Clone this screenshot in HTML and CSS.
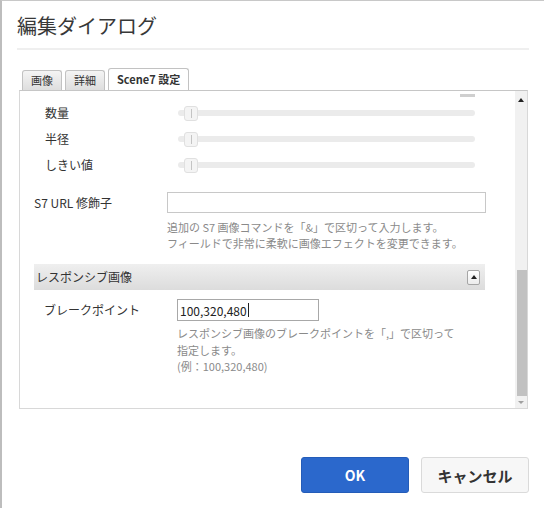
FILE: index.html
```html
<!DOCTYPE html>
<html lang="ja">
<head>
<meta charset="utf-8">
<title>編集ダイアログ</title>
<link rel="stylesheet" href="styles.css">
</head>
<body>
<div class="dialog">
  <h1 class="title">編集ダイアログ</h1>
  <div class="tabs">
    <div class="tab">画像</div>
    <div class="tab">詳細</div>
    <div class="tab active">Scene7 設定</div>
  </div>
  <div class="panel">
    <div class="content">
      <div class="cut"></div>
      <div class="slider-row">
        <span class="slabel">数量</span>
        <div class="track"><span class="handle"></span></div>
      </div>
      <div class="slider-row">
        <span class="slabel">半径</span>
        <div class="track"><span class="handle"></span></div>
      </div>
      <div class="slider-row">
        <span class="slabel">しきい値</span>
        <div class="track"><span class="handle"></span></div>
      </div>
      <div class="field-row s7">
        <span class="flabel">S7 URL 修飾子</span>
        <div class="input wide"></div>
      </div>
      <div class="help s7help">追加の S7 画像コマンドを「&amp;」で区切って入力します。<br>フィールドで非常に柔軟に画像エフェクトを変更できます。</div>
      <div class="section">
        <span class="section-title">レスポンシブ画像</span>
        <span class="collapse"><span class="tri-up"></span></span>
      </div>
      <div class="field-row bp">
        <span class="flabel bplabel">ブレークポイント</span>
        <div class="input narrow">100,320,480<span class="caret"></span></div>
      </div>
      <div class="help bphelp">レスポンシブ画像のブレークポイントを「,」で区切って<br>指定します。<br>(例：100,320,480)</div>
    </div>
    <div class="scrollbar">
      <div class="arrow up"><span class="tri-up"></span></div>
      <div class="strack"><div class="thumb"></div></div>
      <div class="arrow down"><span class="tri-down"></span></div>
    </div>
  </div>
  <div class="footer">
    <button class="btn ok">OK</button>
    <button class="btn cancel">キャンセル</button>
  </div>
</div>
</body>
</html>
```
FILE: styles.css
```css
* { box-sizing: border-box; }
html, body { margin: 0; padding: 0; background: #fff; }
body {
  font-family: "Noto Sans CJK JP", "Noto Sans", sans-serif;
  color: #333;
}
.dialog {
  width: 544px;
  height: 508px;
  border-top: 1px solid #c8c8c8;
  border-left: 2px solid #bdbdbd;
  padding: 0 15px 0 15px;
  display: flex;
  flex-direction: column;
  overflow: hidden;
}
.title {
  margin: 0;
  padding: 11px 0 8px 0;
  font-size: 20px;
  line-height: 28px;
  font-weight: normal;
  color: #383838;
  border-bottom: 2px solid #efefef;
}
.tabs {
  display: flex;
  align-items: flex-end;
  gap: 3px;
  margin: 18px 0 0 5px;
  height: 22px;
}
.tab {
  height: 20px;
  padding: 0 8px;
  font-size: 11px;
  line-height: 19px;
  color: #333;
  background: linear-gradient(#f4f4f4, #dedede);
  border: 1px solid #c2c2c2;
  border-bottom: none;
  border-radius: 3px 3px 0 0;
}
.tab.active {
  height: 22px;
  line-height: 21px;
  padding: 0 8px;
  font-weight: bold;
  background: #fff;
}
.panel {
  margin: 0 1px 0 2px;
  height: 319px;
  border: 1px solid #d8d8d8;
  border-top: 1px solid #c6c6c6;
  display: flex;
}
.content {
  flex: 1;
  min-width: 0;
}
.cut {
  margin: 3px 0 3px 440px;
  width: 15px;
  height: 3px;
  background: #cfcfcf;
}
.slider-row {
  height: 26px;
  display: flex;
  align-items: center;
}
.slabel {
  width: 158px;
  padding-left: 25px;
  font-size: 12px;
  line-height: 16px;
}
.track {
  width: 297px;
  height: 6px;
  background: #ebebeb;
  border-radius: 3px;
  display: flex;
  align-items: center;
}
.handle {
  margin-left: 6px;
  width: 14px;
  height: 15px;
  flex-shrink: 0;
  background: #f4f4f4;
  border: 1px solid #e0e0e0;
  border-radius: 3px;
  display: flex;
  justify-content: center;
  align-items: center;
}
.handle::after {
  content: "";
  width: 1px;
  height: 9px;
  background: #c4c4c4;
}
.field-row {
  display: flex;
  align-items: center;
}
.s7 { margin-top: 14px; }
.flabel {
  width: 147px;
  padding-left: 14px;
  font-size: 12px;
  line-height: 16px;
}
.bplabel {
  width: 157px;
  padding-left: 24px;
}
.input {
  height: 21px;
  border: 1px solid #c8c8c8;
  background: #fff;
  font-size: 12px;
  line-height: 19px;
  padding-left: 2px;
  color: #222;
}
.wide { width: 319px; }
.narrow {
  width: 142px;
  height: 22px;
  border-color: #a8a8a8;
  display: flex;
  align-items: center;
}
.caret {
  width: 1px;
  height: 14px;
  background: #222;
  margin-left: 1px;
}
.help {
  font-size: 11px;
  line-height: 16px;
  color: #8a8a8a;
}
.s7help {
  margin: 6px 0 0 147px;
}
.section {
  margin: 13px 0 0 14px;
  width: 451px;
  height: 26px;
  background: linear-gradient(#efefef, #dcdcdc);
  display: flex;
  align-items: center;
  justify-content: space-between;
  padding: 0 5px 0 2px;
}
.section-title {
  font-size: 12px;
  line-height: 16px;
  color: #333;
}
.collapse {
  width: 13px;
  height: 15px;
  border: 1px solid #a6a6a6;
  border-radius: 2px;
  background: linear-gradient(#fff, #ececec);
  display: flex;
  align-items: center;
  justify-content: center;
}
.tri-up {
  width: 0;
  height: 0;
  border-left: 3px solid transparent;
  border-right: 3px solid transparent;
  border-bottom: 4px solid #222;
}
.tri-down {
  width: 0;
  height: 0;
  border-left: 3px solid transparent;
  border-right: 3px solid transparent;
  border-top: 3px solid #a0a0a0;
}
.bp { margin-top: 9px; }
.bphelp {
  margin: 4px 0 0 157px;
  line-height: 16.5px;
}
.scrollbar {
  width: 12px;
  background: #f1f1f1;
  display: flex;
  flex-direction: column;
}
.arrow {
  display: flex;
  justify-content: center;
  align-items: center;
}
.arrow.up { height: 17px; }
.arrow.down { height: 12px; }
.strack {
  flex: 1;
  padding-left: 2px;
}
.thumb {
  margin-top: 162px;
  height: 126px;
  background: #c1c1c1;
}
.footer {
  margin-top: 48px;
  display: flex;
  justify-content: flex-end;
  gap: 12px;
}
.btn {
  width: 108px;
  height: 36px;
  border-radius: 3px;
  font-family: "Noto Sans CJK JP", "Noto Sans", sans-serif;
  font-weight: bold;
  padding: 0;
}
.ok {
  background: #2b68cc;
  border: 1px solid #245cb8;
  color: #fff;
  font-size: 14px;
}
.cancel {
  background: #f7f7f7;
  border: 1px solid #dadada;
  color: #333;
  font-size: 15px;
}
```
